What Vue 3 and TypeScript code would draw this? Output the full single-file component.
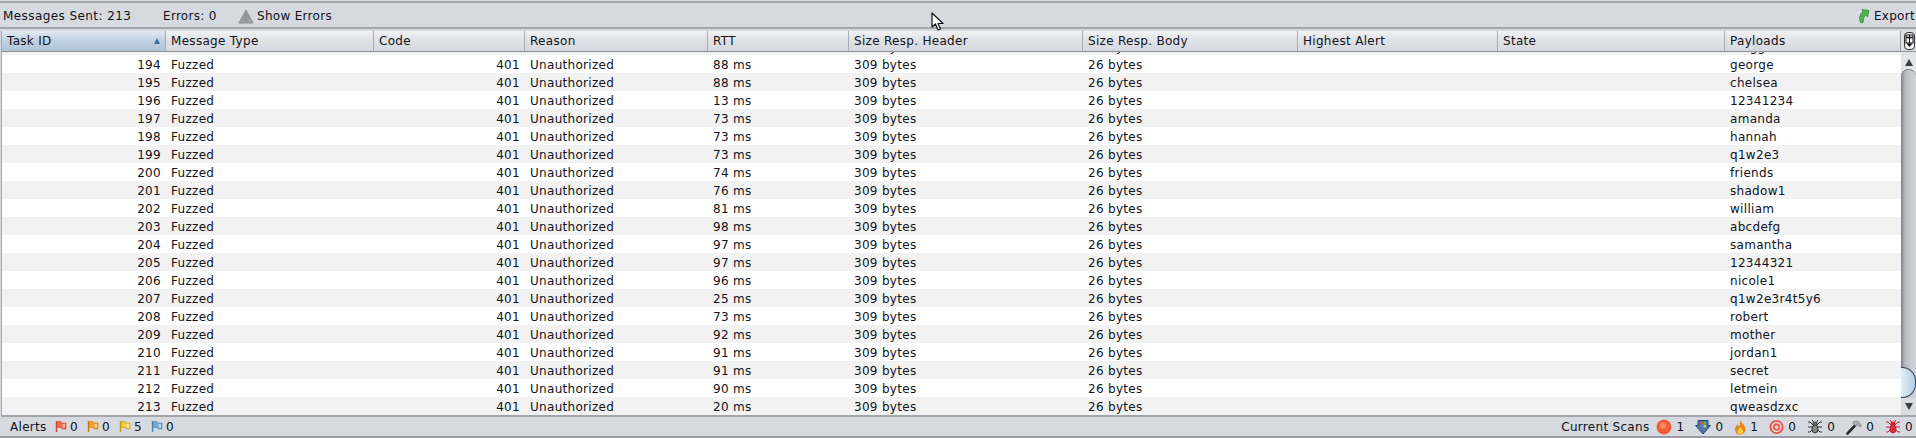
<script setup lang="ts">
const columns = [
  { name: 'Task ID', sorted: true },
  { name: 'Message Type' },
  { name: 'Code' },
  { name: 'Reason' },
  { name: 'RTT' },
  { name: 'Size Resp. Header' },
  { name: 'Size Resp. Body' },
  { name: 'Highest Alert' },
  { name: 'State' },
  { name: 'Payloads' },
]

const rows: [number, number, string][] = [
  [193, 88, 'maggie'],
  [194, 88, 'george'],
  [195, 88, 'chelsea'],
  [196, 13, '12341234'],
  [197, 73, 'amanda'],
  [198, 73, 'hannah'],
  [199, 73, 'q1w2e3'],
  [200, 74, 'friends'],
  [201, 76, 'shadow1'],
  [202, 81, 'william'],
  [203, 98, 'abcdefg'],
  [204, 97, 'samantha'],
  [205, 97, '12344321'],
  [206, 96, 'nicole1'],
  [207, 25, 'q1w2e3r4t5y6'],
  [208, 73, 'robert'],
  [209, 92, 'mother'],
  [210, 91, 'jordan1'],
  [211, 91, 'secret'],
  [212, 90, 'letmein'],
  [213, 20, 'qweasdzxc'],
]

const flags = [
  { color: '#f4694c', light: '#fbb09c', dark: '#c9452c', count: 0 },
  { color: '#f5a02c', light: '#fbd08c', dark: '#c67a14', count: 0 },
  { color: '#f6d03f', light: '#fbeaa0', dark: '#c09a1c', count: 5 },
  { color: '#74a9dc', light: '#bcd8f0', dark: '#4a7fb4', count: 0 },
]
</script>

<template>
  <div class="panel">
    <div class="toolbar">
      <span class="sent">Messages Sent: 213</span>
      <span class="errors">Errors: 0</span>
      <svg class="warn" width="16" height="15" viewBox="0 0 16 15">
        <path d="M8 1 15 14H1Z" fill="#9a9ea3" stroke="#8a8e93" stroke-linejoin="round" />
        <path d="M7.300 4.500h1.400l-.2 5H7.500ZM7.300 10.500h1.400V12H7.300Z" fill="#82868b" />
      </svg>
      <span>Show Errors</span>
      <span class="export">
        <svg width="12" height="16" viewBox="0 0 12 16">
          <path d="M3 15C.5 11 1.500 6 5 4L4 1.500 11 2.500 9.500 9 8 6.800C6 8 5 11 5.500 14Z" fill="#4fb548" stroke="#2c7f30" stroke-width=".7" />
        </svg>
        Export
      </span>
    </div>

    <div class="table">
      <div class="head">
        <div v-for="col in columns" :key="col.name" class="th" :class="{ sorted: col.sorted }">
          {{ col.name }}
          <span v-if="col.sorted" class="sort"></span>
        </div>
        <div class="corner">
          <svg width="11" height="18" viewBox="0 0 11 18">
            <rect x=".5" y=".5" width="10" height="17" rx="3.500" fill="#f2f3f5" stroke="#333" />
            <rect x="2" y="3" width="7" height="8" fill="#fff" stroke="#111" />
            <path d="M2 5.500h7" stroke="#111" stroke-width="1.500" />
            <path d="M5.500 3v8" stroke="#111" />
            <path d="M2.500 11.500h6l-3 3.500Z" fill="#111" />
          </svg>
        </div>
      </div>

      <div class="body">
        <div class="rows">
          <div class="clip">
            <div v-for="(row, i) in rows" :key="row[0]" class="row" :class="{ alt: i % 2 === 0 }">
              <div class="num">{{ row[0] }}</div>
              <div>Fuzzed</div>
              <div class="num">401</div>
              <div>Unauthorized</div>
              <div>{{ row[1] }} ms</div>
              <div>309 bytes</div>
              <div>26 bytes</div>
              <div></div>
              <div></div>
              <div>{{ row[2] }}</div>
            </div>
          </div>
        </div>
        <div class="scrollbar">
          <div class="arrow top"><span class="up"></span></div>
          <div class="track">
            <div class="thumb"></div>
          </div>
          <div class="arrow bottom"><span class="down"></span></div>
        </div>
      </div>
    </div>

    <div class="status">
      <span class="alerts">Alerts</span>
      <span v-for="(f, i) in flags" :key="i" class="flag">
        <svg width="12" height="13" viewBox="0 0 12 13">
          <path d="M1.500 1v11" :stroke="f.dark" stroke-width="1.400" />
          <path d="M2.500 1.500h3.500l.5 1.500h4.500v6H7l-.5-1.500h-4Z" :fill="f.color" :stroke="f.dark" stroke-width=".6" />
          <path d="M7.500 4h2.500v3.500H7.500Z" :fill="f.light" />
        </svg>
        {{ f.count }}
      </span>

      <span class="scans">Current Scans</span>
      <span class="scan first">
        <svg width="16" height="16" viewBox="0 0 16 16">
          <circle cx="8" cy="8" r="7.300" fill="#e8502c" stroke="#f08a5a" stroke-width="1" stroke-dasharray="1.500 1.500" />
          <circle cx="8" cy="8" r="5.800" fill="#f0613a" />
          <circle cx="7" cy="6.500" r="3" fill="#f78a60" />
        </svg>
        1
      </span>
      <span class="scan">
        <svg width="16" height="16" viewBox="0 0 16 16">
          <path d="M3 1.500h10v5h2.500L8 15 .5 6.500H3Z" fill="#4f7aa8" stroke="#24466e" />
          <rect x="5.500" y="3" width="2.500" height="2.500" fill="#e0562f" />
          <rect x="8.500" y="3" width="2.500" height="2.500" fill="#65b345" />
          <rect x="5.500" y="6" width="2.500" height="2.500" fill="#3f8fd8" />
          <rect x="8.500" y="6" width="2.500" height="2.500" fill="#efc531" />
        </svg>
        0
      </span>
      <span class="scan">
        <svg class="flame" width="12" height="16" viewBox="0 0 12 16">
          <path d="M6 .5C7 4 11.500 6 11.500 10.500 11.500 13.500 9 15.500 6 15.500S1 13.500 1 10.500C1 8 2.500 7 3.500 5 4 6.500 4.500 7 5 7.500 6 5.500 6.500 3 6 .5Z" fill="#ee8420" />
          <path d="M6.500 8C7.500 10 9 10.500 9 12.500 9 14 7.800 15 6.300 15S3.500 14 3.500 12.500C3.500 10.500 6 10 6.500 8Z" fill="#fbd33f" />
        </svg>
        1
      </span>
      <span class="scan">
        <svg width="15" height="16" viewBox="0 0 16 16">
          <circle cx="8" cy="8" r="7.500" fill="#e4584f" />
          <circle cx="8" cy="8" r="5.500" fill="#f6cfc8" />
          <circle cx="8" cy="8" r="3.800" fill="#e4584f" />
          <circle cx="8" cy="8" r="2" fill="#f6cfc8" />
        </svg>
        0
      </span>
      <span class="scan">
        <svg width="16" height="16" viewBox="0 0 16 16" fill="none" stroke="#333" stroke-width="1">
          <path d="M6 6 3 3 1 3M5 8H1M6 10l-3 3-2 0M10 6l3-3h2M11 8h4M10 10l3 3h2M6.500 3 5 1M9.500 3 11 1" />
          <ellipse cx="8" cy="5" rx="2.200" ry="2" fill="#777" />
          <ellipse cx="8" cy="10" rx="3" ry="4" fill="#8a8a8a" />
        </svg>
        0
      </span>
      <span class="scan">
        <svg width="16" height="16" viewBox="0 0 16 16">
          <path d="M1.500 14.500 9 6.500" stroke="#2b2b2b" stroke-width="2.600" stroke-linecap="round" />
          <path d="M6.500 3.500C8.500 1.500 11 1.500 13 3L15.500 6.500 14 8 11.500 6 9.500 7Z" fill="#a9adb1" stroke="#777b80" stroke-width=".6" />
        </svg>
        0
      </span>
      <span class="scan">
        <svg width="16" height="16" viewBox="0 0 16 16" fill="none" stroke="#c8202a" stroke-width="1">
          <path d="M6 6 3 3 1 3M5 8H1M6 10l-3 3-2 0M10 6l3-3h2M11 8h4M10 10l3 3h2M6.500 3 5 1M9.500 3 11 1" />
          <ellipse cx="8" cy="5" rx="2.200" ry="2" fill="#c8202a" />
          <ellipse cx="8" cy="10" rx="3" ry="4" fill="#d8303a" />
        </svg>
        0
      </span>
    </div>

    <svg class="cursor" width="14" height="20" viewBox="0 0 14 20">
      <path d="M1 1V15L4.500 12 7 18 9.500 17 7 11.500H12Z" fill="#fff" stroke="#111" stroke-width="1.200" stroke-linejoin="round" />
    </svg>
  </div>
</template>

<style>
html, body {
  margin: 0;
  background: #d6d9df;
}
</style>

<style scoped>
.panel {
  position: relative;
  width: 1916px;
  height: 438px;
  overflow: hidden;
  background: #d6d9df;
  color: #10131a;
  font-family: "DejaVu Sans", sans-serif;
  font-size: 12px;
  letter-spacing: .3px;
  display: flex;
  flex-direction: column;
}

.toolbar {
  height: 28px;
  box-sizing: border-box;
  margin-top: 1px;
  margin-bottom: 2px;
  border-top: 2px solid #a2a5ab;
  border-bottom: 2px solid #a2a5ab;
  padding: 2px 3px 0;
  display: flex;
  align-items: center;
  flex: none;
}
.sent {
  width: 160px;
  letter-spacing: .42px;
}
.errors { width: 75px; }
.warn { margin-right: 3px; }
.export {
  margin-left: auto;
  margin-right: -2px;
  display: flex;
  align-items: center;
  gap: 4px;
}

.table {
  margin-left: 1px;
  border-left: 1px solid #a2a5aa;
  border-bottom: 2px solid #a2a5aa;
  height: 386px;
  box-sizing: border-box;
  flex: none;
  display: flex;
  flex-direction: column;
}

.head,
.row {
  display: grid;
  grid-template-columns: 164px 208px 151px 183px 141px 234px 215px 200px 227px 176px;
}

.head {
  height: 21px;
  flex: none;
  grid-template-columns: 164px 208px 151px 183px 141px 234px 215px 200px 227px 176px 15px;
  background: linear-gradient(#f1f2f4, #e2e4e8 40%, #d4d7dd);
  border-bottom: 1px solid #8e9196;
  box-sizing: border-box;
}
.th {
  position: relative;
  box-sizing: border-box;
  border-right: 1px solid #a9acb2;
  padding-left: 5px;
  line-height: 20px;
  white-space: nowrap;
}
.th:nth-child(10) {
  border-right: 1px solid #9a9da3;
}
.th.sorted {
  background: linear-gradient(#e2e9f0, #c4d3e1 45%, #afc4d8);
}
.sort {
  position: absolute;
  right: 5px;
  top: 7px;
  border-left: 3.500px solid transparent;
  border-right: 3.500px solid transparent;
  border-bottom: 6px solid #3f6f9f;
}
.corner {
  display: flex;
  justify-content: center;
  padding-top: 1px;
  padding-left: 2px;
  background: #dfe1e6;
}

.body {
  flex: 1;
  min-height: 0;
  display: flex;
  background: #fff;
}
.rows {
  width: 1899px;
  flex: none;
  overflow: hidden;
}
.clip {
  margin-top: -15px;
}
.row {
  height: 18px;
  grid-auto-rows: 18px;
  line-height: 18px;
  background: #fff;
}
.row.alt {
  background: #f2f2f2;
}
.row > div {
  box-sizing: border-box;
  padding: 1px 3px 0 5px;
  white-space: nowrap;
  overflow: hidden;
}
.row > .num {
  text-align: right;
  padding-right: 5px;
}

.scrollbar {
  width: 15px;
  flex: none;
  display: flex;
  flex-direction: column;
  background: #e2e4e8;
}
.arrow {
  flex: none;
  display: flex;
  align-items: center;
  justify-content: center;
}
.arrow.top {
  height: 17px;
  padding-top: 3px;
  box-sizing: border-box;
}
.arrow.bottom {
  height: 17px;
  background: #d9dce1;
}
.up {
  border-left: 4px solid transparent;
  border-right: 4px solid transparent;
  border-bottom: 7px solid #3a3d42;
}
.down {
  border-left: 4px solid transparent;
  border-right: 4px solid transparent;
  border-top: 7px solid #3a3d42;
}
.track {
  position: relative;
  flex: 1;
  border-radius: 8px 8px 0 0;
  border-top: 1px solid #777b84;
  background: linear-gradient(90deg, #7d8089, #b4b7bf 25%, #c6c9d0 60%, #d2d5da);
}
.thumb {
  position: absolute;
  left: 0;
  right: 0;
  bottom: 0;
  height: 31px;
  box-sizing: border-box;
  border: 1px solid #2d4763;
  border-left: none;
  border-radius: 0 14px 14px 0;
  background: linear-gradient(90deg, #e3edf5, #c6daeb 60%, #b6cfe6);
}

.status {
  flex: 1;
  display: flex;
  align-items: center;
  padding-left: 10px;
  border-bottom: 2px solid #9a9da3;
}
.alerts { width: 45px; }
.flag {
  display: flex;
  align-items: center;
  gap: 3px;
  width: 32px;
}
.scans { margin-left: auto; }
.scan {
  display: flex;
  align-items: center;
  gap: 4px;
  margin-left: 11px;
}
.scan:last-child { margin-right: 3px; }
.scan.first { margin-left: 7px; }

.cursor {
  position: absolute;
  left: 931px;
  top: 12px;
}
</style>
